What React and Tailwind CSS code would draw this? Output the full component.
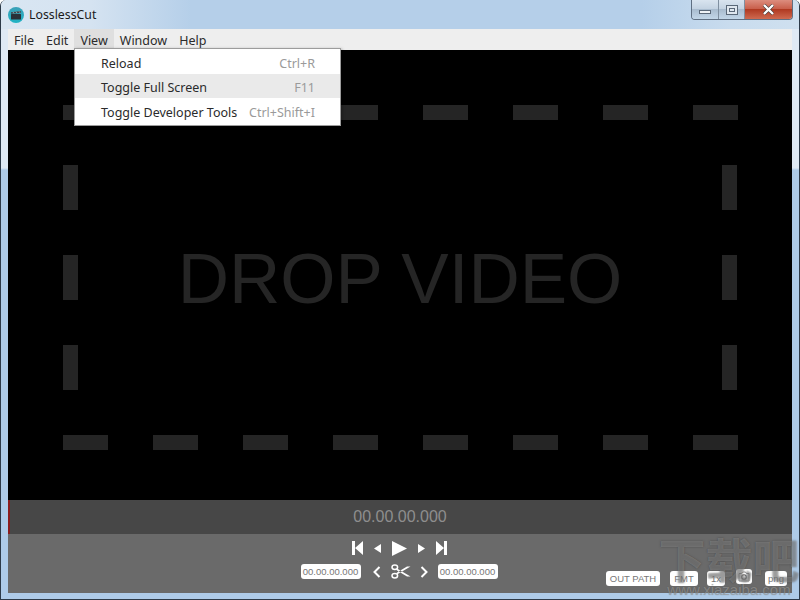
import React from "react";

const Logo = () => (
  <svg width="16" height="16" viewBox="0 0 16 16" className="shrink-0">
    <defs>
      <linearGradient id="lg" x1="0" y1="0" x2="0" y2="1">
        <stop offset="0" stopColor="#3aa0b8" />
        <stop offset="1" stopColor="#1fb3c4" />
      </linearGradient>
    </defs>
    <circle cx="8" cy="8" r="8" fill="url(#lg)" />
    <rect x="3" y="7" width="10" height="5.5" rx="0.5" fill="#2a3038" />
    <path d="M3 5.2 L12.6 4 L13 6 L3 6.8 Z" fill="#3c424a" />
    <path d="M5 5 l1 1.5 M8 4.6 l1 1.6 M11 4.3 l1 1.5" stroke="#b8c4cc" strokeWidth="0.7" />
  </svg>
);

const WinButtons = () => (
  <div className="flex h-[20px] mr-[6px] rounded-b-[4px] border border-t-0 border-[#5f6f82] overflow-hidden">
    <div className="w-[27px] flex items-center justify-center bg-[linear-gradient(180deg,#d9e4ef_0%,#c4d3e2_45%,#a9bccf_50%,#c2d6e8_100%)] border-r border-[#7f8fa0]">
      <div className="w-[12px] h-[4px] mt-[4px] bg-[#eef2f6] border border-[#5a6878]" />
    </div>
    <div className="w-[26px] flex items-center justify-center bg-[linear-gradient(180deg,#d9e4ef_0%,#c4d3e2_45%,#a9bccf_50%,#c2d6e8_100%)] border-r border-[#7f8fa0]">
      <div className="w-[12px] h-[10px] border border-[#5a6878] bg-[#dfe7ef] flex items-center justify-center">
        <div className="w-[6px] h-[4px] border border-[#5a6878]" />
      </div>
    </div>
    <div className="w-[47px] flex items-center justify-center bg-[linear-gradient(180deg,#dc8d7e_0%,#c9604c_45%,#b03a22_50%,#cf6a50_100%)]">
      <svg width="13" height="11" viewBox="0 0 13 11">
        <path d="M2 1 L11 10 M11 1 L2 10" stroke="#3b3b3b" strokeWidth="3.4" />
        <path d="M2 1 L11 10 M11 1 L2 10" stroke="#ffffff" strokeWidth="2.4" />
      </svg>
    </div>
  </div>
);

const Shape = ({ w, h, d }) => (
  <svg width={w} height={h} viewBox={`0 0 ${w} ${h}`} className="shrink-0">
    <path d={d} fill="#ffffff" />
  </svg>
);

const Chevron = ({ right }) => (
  <svg width="8" height="12" viewBox="0 0 8 12" className="shrink-0">
    <path d={right ? "M1.5 1 L6.5 6 L1.5 11" : "M6.5 1 L1.5 6 L6.5 11"} fill="none" stroke="#ffffff" strokeWidth="2" />
  </svg>
);

const Scissors = () => (
  <svg width="20" height="15" viewBox="0 0 20 15" className="shrink-0">
    <g fill="none" stroke="#ffffff">
      <ellipse cx="3.8" cy="3.2" rx="2.8" ry="2.2" strokeWidth="1.5" />
      <ellipse cx="3.8" cy="11.8" rx="2.8" ry="2.2" strokeWidth="1.5" />
    </g>
    <path d="M6 4.6 L19.5 12.5 L16 12.6 L5.6 6.2 Z M6 10.4 L19.5 2.5 L16 2.4 L5.6 8.8 Z" fill="#ffffff" />
  </svg>
);

const Pill = ({ children, className = "" }) => (
  <div className={`h-[15px] rounded-[3px] bg-white text-[#777777] text-[9.5px] leading-[15px] text-center font-['Liberation_Sans',sans-serif] ${className}`}>
    {children}
  </div>
);

const MenuRow = ({ label, keys, active, h, pt }) => (
  <div className={`flex justify-between pl-[26px] pr-[25px] items-center ${pt} ${h} ${active ? "bg-[#eaeaea]" : ""}`}>
    <span className="text-[#2b2b2b]">{label}</span>
    <span className="text-[#9a9a9a]">{keys}</span>
  </div>
);

const HDashes = () => (
  <div className="h-[15px] shrink-0 bg-[repeating-linear-gradient(90deg,#252525_0,#252525_45px,transparent_45px,transparent_90px)]" />
);

const VDashes = ({ className = "" }) => (
  <div className={`w-[15px] bg-[repeating-linear-gradient(180deg,transparent_0,transparent_45px,#252525_45px,#252525_90px)] ${className}`} />
);

export default function App() {
  return (
    <div className="relative w-[800px] h-[600px] overflow-hidden flex flex-col rounded-t-[6px] border-x border-b border-[#2d3a48] bg-[linear-gradient(180deg,#dfe9f4_0,#dfe9f4_168px,#aecbe8_170px,#aecbe8_100%)] font-['Noto_Sans',sans-serif] text-[12.5px]">
      <div className="h-[29px] shrink-0 flex items-start justify-between bg-[linear-gradient(90deg,#d9e6f2_0,#d5e3f1_90px,#b5cfe9_190px,#b5cfe9_640px,#c9dcee_730px,#cfe0ef_100%)]">
        <div className="flex items-center gap-[5px] pl-[7px] pt-[7px]">
          <Logo />
          <span className="text-[#1a1a1a] text-[12.3px] leading-[16px]">LosslessCut</span>
        </div>
        <WinButtons />
      </div>

      <div className="relative flex-1 flex flex-col ml-[7px] mr-[7px] mb-[6px] min-h-0">
        <div className="h-[21px] shrink-0 flex bg-[#eeeeee] text-[#2b2b2b] leading-[23px]">
          <div className="px-[6px] h-[21px]">File</div>
          <div className="px-[6px] h-[21px]">Edit</div>
          <div className="px-[6px] h-[21px] bg-[#dfdfdf]">View</div>
          <div className="px-[6px] h-[21px]">Window</div>
          <div className="px-[6px] h-[21px]">Help</div>
        </div>

        <div className="flex-1 bg-black min-h-0 pl-[55px] pr-[54px] pt-[55px] pb-[50px]">
          <div className="h-full flex flex-col">
            <HDashes />
            <div className="flex-1 flex justify-between min-h-0">
              <VDashes />
              <div className="flex-1 flex items-center justify-center">
                <span className="text-[#252525] text-[71px] leading-none font-['Liberation_Sans',sans-serif] mt-[1px]">DROP VIDEO</span>
              </div>
              <VDashes className="mr-[1px]" />
            </div>
            <HDashes />
          </div>
        </div>

        <div className="relative h-[34px] shrink-0 bg-[#474747] flex items-center justify-center text-[#8e8e8e] text-[16px] font-['Liberation_Sans',sans-serif]">
          <div className="absolute left-0 top-0 bottom-0 w-[2px] bg-[#8a1c1c]" />
          00.00.00.000
        </div>

        <div className="relative h-[59px] shrink-0 bg-[#6a6a6a] flex flex-col items-center pt-[7px] gap-[9px]">
          <div className="flex items-center gap-[11px] h-[14px] mr-[1px]">
            <Shape w={11} h={14} d="M0 0 H3 V14 H0 Z M3 7 L11 0 V14 Z" />
            <Shape w={7} h={9} d="M7 0 V9 L0 4.5 Z" />
            <Shape w={15} h={15} d="M0 0 L15 7.5 L0 15 Z" />
            <Shape w={7} h={9} d="M0 0 V9 L7 4.5 Z" />
            <Shape w={11} h={14} d="M11 0 H8 V14 H11 Z M8 7 L0 0 V14 Z" />
          </div>
          <div className="flex items-center mr-[2px]">
            <Pill className="w-[60px] mr-[12px]">00.00.00.000</Pill>
            <Chevron />
            <div className="ml-[10px] mr-[9px]"><Scissors /></div>
            <Chevron right />
            <Pill className="w-[60px] ml-[10px]">00.00.00.000</Pill>
          </div>
          <div className="absolute right-[5px] bottom-[7px] flex items-start">
            <Pill className="w-[54px] mr-[10px]">OUT PATH</Pill>
            <Pill className="w-[28px] mr-[9px]">FMT</Pill>
            <Pill className="w-[18px] mr-[11px]">1x</Pill>
            <div className="w-[16px] h-[15px] -mt-[2px] mr-[13px] bg-white rounded-[3px] flex items-center justify-center">
              <svg width="12" height="11" viewBox="0 0 12 11">
                <path d="M1 2.5 H3.5 L4.5 1 H7.5 L8.5 2.5 H11 V10 H1 Z" fill="#ffffff" stroke="#8a8a8a" />
                <circle cx="6" cy="6" r="2.3" fill="none" stroke="#6a6a6a" strokeWidth="1.1" />
              </svg>
            </div>
            <Pill className="w-[22px]">png</Pill>
          </div>
        </div>

        <div className="absolute left-[66px] top-[19px] w-[267px] h-[78px] bg-white border border-[#9c9c9c] shadow-[1px_1px_3px_rgba(0,0,0,0.35)]">
          <MenuRow label="Reload" keys="Ctrl+R" h="h-[25px]" pt="pt-[6px]" />
          <MenuRow label="Toggle Full Screen" keys="F11" active h="h-[24px]" pt="pt-[4px]" />
          <MenuRow label="Toggle Developer Tools" keys="Ctrl+Shift+I" h="h-[26px]" pt="pt-[4px]" />
        </div>
      </div>

      <div className="absolute right-[-2px] bottom-[1px] w-[144px] h-[64px] flex flex-col items-center pointer-events-none">
        <span className="text-[47px] leading-[48px] font-bold text-[rgba(190,190,190,0.3)] [text-shadow:0_0_2px_rgba(50,50,50,0.55)] font-['Noto_Sans_CJK_SC',sans-serif]">下载吧</span>
        <span className="text-[15px] leading-[16px] text-[rgba(170,170,170,0.55)] [text-shadow:0_0_1px_rgba(50,50,50,0.4)] font-['Liberation_Sans',sans-serif]">www.xiazaiba.com</span>
      </div>
    </div>
  );
}
